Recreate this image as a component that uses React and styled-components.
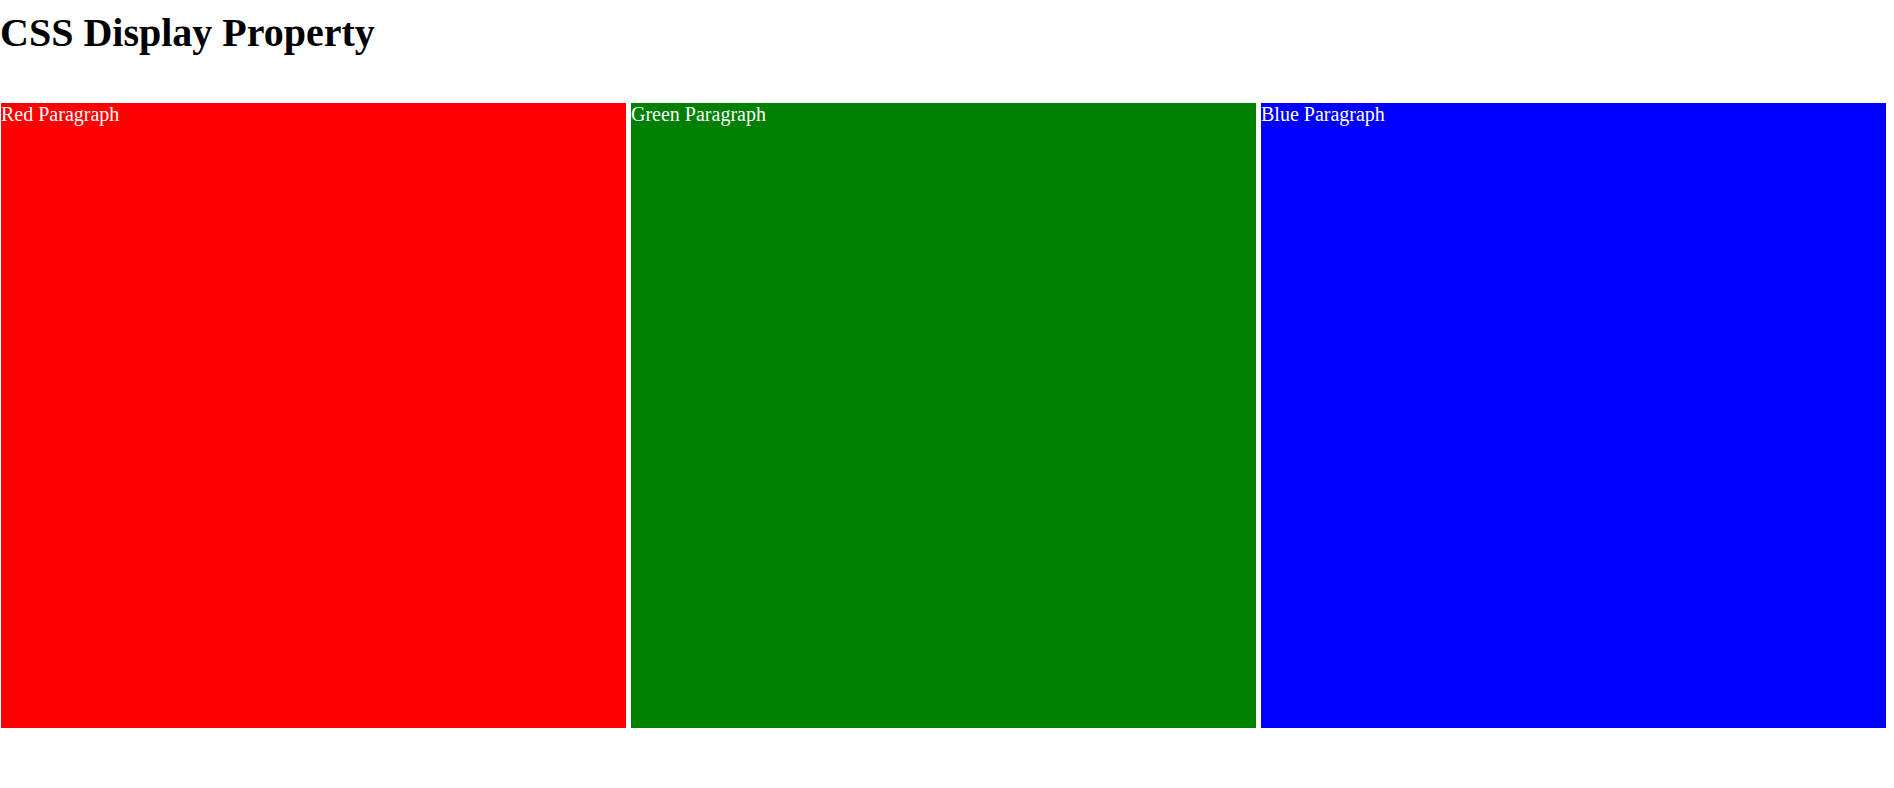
import React from "react";
import styled, { createGlobalStyle } from "styled-components";

const GlobalStyle = createGlobalStyle`
  html, body {
    margin: 0;
    padding: 0;
    background: #ffffff;
    font-family: "Liberation Serif", "Times New Roman", serif;
  }
`;

const Page = styled.div`
  display: flex;
  flex-direction: column;
  align-items: flex-start;
  padding-top: 10px;
`;

const Title = styled.h1`
  margin: 0 0 27px 0;
  font-size: 40px;
  line-height: 46px;
  font-weight: 700;
  color: #000000;
`;

const Row = styled.div`
  display: flex;
  gap: 5px;
  padding-left: 1px;
  margin-top: 20px;
`;

const Box = styled.p`
  margin: 0;
  width: 625px;
  height: 625px;
  background: ${(p) => p.$bg};
  color: #ffffff;
  font-size: 20px;
  line-height: normal;
`;

const items = [
  { label: "Red Paragraph", bg: "#ff0000" },
  { label: "Green Paragraph", bg: "#008000" },
  { label: "Blue Paragraph", bg: "#0000ff" },
];

export default function App() {
  return (
    <>
      <GlobalStyle />
      <Page>
        <Title>CSS Display Property</Title>
        <Row>
          {items.map((it) => (
            <Box key={it.label} $bg={it.bg}>
              {it.label}
            </Box>
          ))}
        </Row>
      </Page>
    </>
  );
}
